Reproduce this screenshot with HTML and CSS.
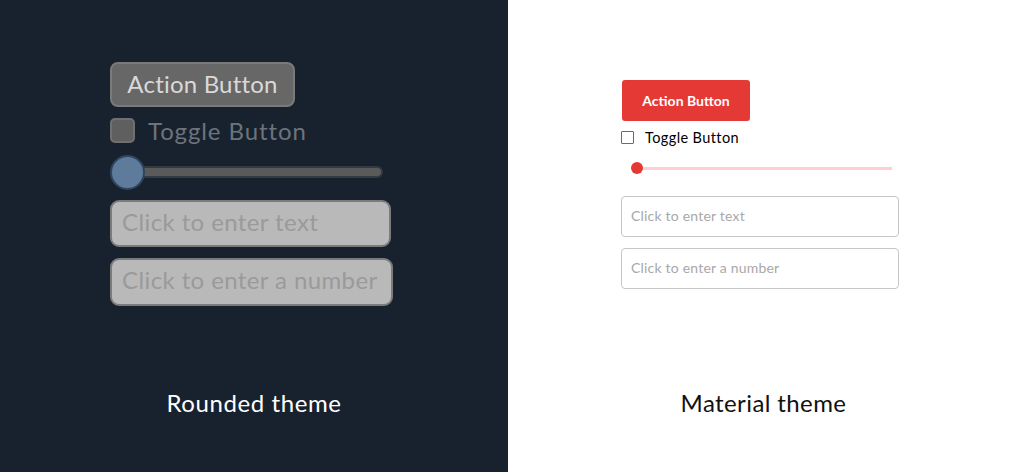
FILE: index.html
```html
<!DOCTYPE html>
<html>
<head>
<meta charset="utf-8">
<link rel="stylesheet" href="styles.css">
</head>
<body>
<div class="page">
  <section class="panel rounded">
    <div class="controls">
      <button class="r-btn">Action Button</button>
      <label class="r-toggle"><span class="r-box"></span><span>Toggle Button</span></label>
      <div class="r-slider"><div class="r-track"></div><div class="r-thumb"></div></div>
      <input class="r-input" type="text" placeholder="Click to enter text">
      <input class="r-input r-num" type="text" placeholder="Click to enter a number">
    </div>
    <div class="caption">Rounded theme</div>
  </section>
  <section class="panel material">
    <div class="controls">
      <button class="m-btn">Action Button</button>
      <label class="m-toggle"><span class="m-box"></span><span>Toggle Button</span></label>
      <div class="m-slider"><div class="m-track"></div><div class="m-thumb"></div></div>
      <input class="m-input" type="text" placeholder="Click to enter text">
      <input class="m-input" type="text" placeholder="Click to enter a number">
    </div>
    <div class="caption">Material theme</div>
  </section>
</div>
</body>
</html>
```
FILE: styles.css
```css
* { box-sizing: border-box; }
html, body { margin: 0; padding: 0; }
body { font-family: Lato, "Noto Sans", sans-serif; }
.page { display: grid; grid-template-columns: 508px 1fr; width: 1019px; height: 472px; }
.panel { display: flex; flex-direction: column; height: 472px; }
.rounded { background: #18222f; }
.material { background: #ffffff; }
.controls { display: flex; flex-direction: column; align-items: flex-start; }
.caption { margin-top: auto; padding-bottom: 54px; text-align: center; font-size: 24px; line-height: 30px; letter-spacing: 0.4px; }
.rounded .caption { color: #ffffff; letter-spacing: 0.6px; }
.material .caption { color: #111111; }

/* Rounded */
.rounded .controls { padding: 62px 0 0 110px; gap: 11px; }
.r-btn { height: 45px; width: 185px; padding: 0 0 2px; border: 2px solid #7a7a7a; border-radius: 8px; background: #676767; color: #d9d9d9; font-family: inherit; font-size: 24px; letter-spacing: 0.2px; }
.r-toggle { display: flex; align-items: center; gap: 13px; height: 25px; color: #6d737b; font-size: 24px; letter-spacing: 0.9px; }
.r-box { width: 25px; height: 25px; border-radius: 5px; background: #5f5f5f; border: 2px solid #707070; }
.r-slider { position: relative; width: 273px; height: 34px; margin-top: 1px; }
.r-track { position: absolute; left: 17px; right: 0; top: 11px; height: 12px; border-radius: 6px; background: #5a5a5a; border: 2px solid #333a42; }
.r-thumb { position: absolute; left: 0; top: 0; width: 35px; height: 35px; border-radius: 50%; background: #5e7b9b; border: 2px solid #2d4660; }
.r-input { width: 281px; height: 47px; padding: 0 10px 5px; border: 2px solid #7b7b7b; border-radius: 9px; background: #b9b9b9; font-family: inherit; font-size: 24px; letter-spacing: 0.4px; outline: none; }
.r-num { width: 283px; height: 48px; }
.r-input::placeholder { color: #9a9a9a; }

/* Material */
.material .controls { padding: 80px 0 0 113px; }
.m-btn { height: 41px; width: 128px; margin-left: 1px; padding: 0 0 1px; border: none; border-radius: 3px; background: #e53935; color: #ffffff; font-family: inherit; font-size: 14px; font-weight: 700; }
.m-toggle { display: flex; align-items: center; gap: 11px; margin-top: 9px; height: 14px; color: #000000; font-size: 14.5px; letter-spacing: 0.4px; }
.m-box { width: 13px; height: 13px; border: 1px solid #6a6a6a; border-radius: 1px; }
.m-slider { position: relative; width: 261px; height: 12px; margin-top: 18px; margin-left: 10px; }
.m-track { position: absolute; left: 6px; right: 0; top: 5px; height: 3px; background: #ffcdd2; }
.m-thumb { position: absolute; left: 0; top: 0; width: 12px; height: 12px; border-radius: 50%; background: #e53935; }
.m-input { width: 278px; height: 41px; padding: 0 9px 2px; border: 1px solid #c6c6c6; border-radius: 4px; background: #fff; font-family: inherit; font-size: 14px; letter-spacing: 0.2px; outline: none; margin-top: 22px; }
.m-input + .m-input { margin-top: 11px; }
.m-input::placeholder { color: #a8a8a8; }
```
